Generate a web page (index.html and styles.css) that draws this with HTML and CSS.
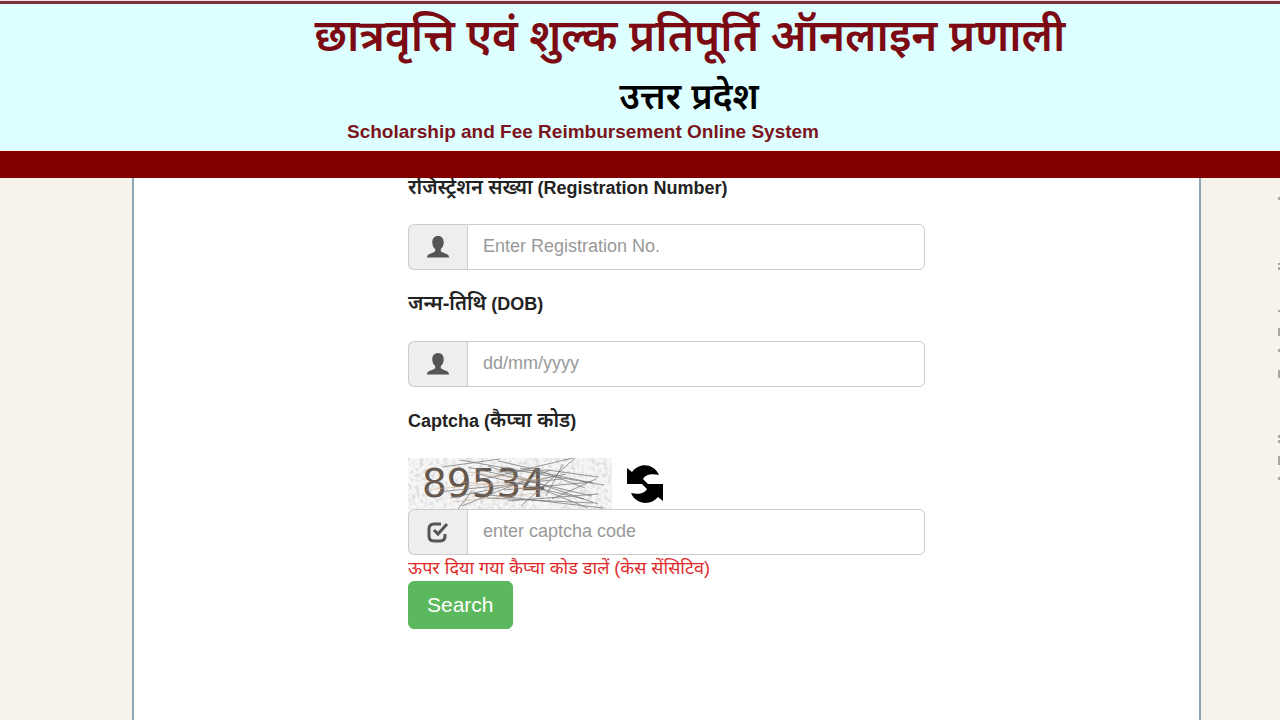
FILE: index.html
```html
<!DOCTYPE html>
<html lang="hi">
<head>
<meta charset="utf-8">
<meta name="viewport" content="width=device-width, initial-scale=1">
<title>Scholarship and Fee Reimbursement Online System</title>
<link rel="stylesheet" href="styles.css">
</head>
<body>
<header class="site-header">
  <div class="banner">
    <h1 class="title">छात्रवृत्ति एवं शुल्क प्रतिपूर्ति ऑनलाइन प्रणाली</h1>
    <p class="state">उत्तर प्रदेश</p>
    <p class="subtitle">Scholarship and Fee Reimbursement Online System</p>
  </div>
  <div class="nav-bar"></div>
</header>
<main class="page">
  <form class="search-form">
    <label class="label" for="reg"><span class="hindi">रजिस्ट्रेशन संख्या</span> (Registration Number)</label>
    <div class="input-group">
      <span class="addon"><svg class="icon" viewBox="0 0 24 24"><path fill="#555" d="M12 1C8 1 6 4 6.300 8c.3 3 1.300 5 2.900 6v2.200c-1 1.300-4 1.800-6.200 3-1.300.7-2 1.500-2 3.300h22c0-1.800-.7-2.600-2-3.300-2.200-1.200-5.200-1.700-6.200-3V14c1.600-1 2.600-3 2.900-6C18 4 16 1 12 1z"/></svg></span>
      <input class="field" id="reg" type="text" placeholder="Enter Registration No.">
    </div>
    <label class="label" for="dob"><span class="hindi">जन्म-तिथि</span> (DOB)</label>
    <div class="input-group">
      <span class="addon"><svg class="icon" viewBox="0 0 24 24"><path fill="#555" d="M12 1C8 1 6 4 6.300 8c.3 3 1.300 5 2.900 6v2.200c-1 1.300-4 1.800-6.200 3-1.300.7-2 1.500-2 3.300h22c0-1.800-.7-2.600-2-3.300-2.200-1.200-5.200-1.700-6.200-3V14c1.600-1 2.600-3 2.900-6C18 4 16 1 12 1z"/></svg></span>
      <input class="field" id="dob" type="text" placeholder="dd/mm/yyyy">
    </div>
    <label class="label" for="captcha">Captcha (<span class="hindi">कैप्चा कोड</span>)</label>
    <div class="captcha-row">
      <svg class="captcha" viewBox="0 0 204 51" role="img" aria-label="Captcha">
        <defs>
          <filter id="grain" x="0" y="0" width="100%" height="100%">
            <feTurbulence type="fractalNoise" baseFrequency="0.25" numOctaves="3" seed="4"/>
            <feColorMatrix values="0 0 0 0 .7  0 0 0 0 .7  0 0 0 0 .7  3 0 0 0 -1.350"/>
          </filter>
        </defs>
        <rect width="204" height="51" fill="#f6f6f6"/>
        <rect width="204" height="51" filter="url(#grain)"/>
        <text class="captcha-text" x="14" y="39">89534</text>
        <path fill="none" stroke="#777" stroke-width="1" opacity=".75" d="M34 9L92 1M52 2l78 14 66 11M60 9l124 29M72 22L165 0M42 40l116-24M54 48l88-36M50 51l14-18M65 35l130 15M80 8l110 38M90 14l50-2 50 7M96 32l88-8M100 43l90-7M113 48l54-48M138 38L155 6M144 41l44-20M126 28l54 22M70 16l106 25M79 40l106 5M112 10l73 15M30 34l124-13M90 3l40 9 47 18"/>
        <path fill="none" stroke="#c9a78c" stroke-width="1" opacity=".5" d="M18 32l122-12M54 24l80 8M45 44l95-10M60 14l70 9"/>
      </svg>
      <button class="refresh" type="button" aria-label="Refresh captcha"><svg class="refresh-icon" viewBox="0 0 38 38"><path d="M1 3l5 4C13-3 28-2 33 10c-8-2-14 0-16 4l5 5H1zM37 36l-5-4C25 41 10 40 5 28c8 2 14 0 16-4l-5-5h21z"/></svg></button>
    </div>
    <div class="input-group">
      <span class="addon"><svg class="icon" viewBox="0 0 24 24" fill="none" stroke="#555"><path stroke-width="3" d="M15 4H8Q3 4 3 9v7q0 5 5 5h6q5 0 5-5v-2"/><path stroke-width="3" d="M8 10l4 4L21 4"/></svg></span>
      <input class="field" id="captcha" type="text" placeholder="enter captcha code">
    </div>
    <p class="hint">ऊपर दिया गया कैप्चा कोड डालें (केस सेंसिटिव)</p>
    <button class="search" type="submit">Search</button>
  </form>
</main>
<svg class="edge-marks" viewBox="0 0 2 300" aria-hidden="true"><path stroke="#aaa69f" stroke-width="2" d="M1 5v3M1 71v2M1 75v3M1 118v2M1 136v8M1 157v3M1 178v8M1 243v3M1 248v3M1 264v9M1 285v3"/></svg>
</body>
</html>
```

FILE: styles.css
```css
* {
  box-sizing: border-box;
}

body {
  margin: 0;
  min-height: 100vh;
  display: flex;
  flex-direction: column;
  background: #f6f3ec;
  color: #222;
  font-family: "Liberation Sans", "Noto Sans Devanagari", "Noto Sans", sans-serif;
  font-size: 18px;
  line-height: 24px;
  overflow: hidden;
}

h1,
p {
  margin: 0;
}

.site-header {
  position: relative;
  z-index: 1;
  border-top: 1px solid #f3dddd;
}

.banner {
  border-top: 3px solid #7c3038;
  border-bottom: 1px solid #f6f3ec;
  padding: 6px 0 8px;
  background: #dff;
}

.title {
  padding-left: 100px;
  color: #7c0a12;
  font-family: "Noto Sans Devanagari", "Noto Sans", sans-serif;
  font-size: 44px;
  font-weight: 600;
  line-height: 62px;
  text-align: center;
  white-space: nowrap;
}

.state {
  padding-left: 98px;
  color: #000;
  font-size: 36px;
  font-weight: 600;
  line-height: 50px;
  text-align: center;
}

.subtitle {
  padding-right: 114px;
  color: #7c1420;
  font-size: 19px;
  font-weight: bold;
  line-height: 20px;
  text-align: center;
}

.nav-bar {
  height: 27px;
  background: #800000;
}

.page {
  flex: 1;
  margin: 0 79px 0 132px;
  border: solid #8fa5b2;
  border-width: 0 2px;
  background: #fff;
}

.search-form {
  max-width: 517px;
  margin: 0 auto;
}

.label {
  display: block;
  height: 46px;
  font-weight: bold;
  line-height: 19px;
}

.hindi {
  font-size: 20px;
  font-weight: 600;
}

.input-group {
  display: flex;
  height: 46px;
}

.input-group + .label {
  height: 71px;
  padding-top: 24px;
}

.addon {
  display: flex;
  align-items: center;
  justify-content: center;
  width: 59px;
  border: 1px solid #ccc;
  border-right: 0;
  border-radius: 6px 0 0 6px;
  background: #eee;
}

.icon {
  width: 24px;
  height: 24px;
}

.field {
  flex: 1;
  min-width: 0;
  padding: 0 15px 2px;
  border: 1px solid #ccc;
  border-radius: 0 6px 6px 0;
  background: #fff;
  color: #555;
  font: inherit;
}

.field::placeholder {
  color: #999;
  opacity: 1;
}

.captcha-row {
  display: flex;
  align-items: center;
  gap: 14px;
}

.captcha {
  width: 204px;
  height: 51px;
}

.captcha-text {
  fill: #66574c;
  font-family: "DejaVu Sans", sans-serif;
  font-size: 39px;
}

.refresh {
  padding: 0;
  border: 0;
  background: none;
}

.refresh-icon {
  display: block;
  width: 38px;
  height: 38px;
}

.hint {
  color: #e02b2b;
  line-height: 26px;
}

.search {
  display: block;
  height: 48px;
  padding: 0 18px;
  border: 1px solid #5cb85c;
  border-radius: 6px;
  background: #5cb85c;
  color: #fff;
  font: inherit;
  font-size: 21px;
}

.edge-marks {
  position: absolute;
  top: 192px;
  right: 0;
  width: 2px;
  height: 300px;
}
```
